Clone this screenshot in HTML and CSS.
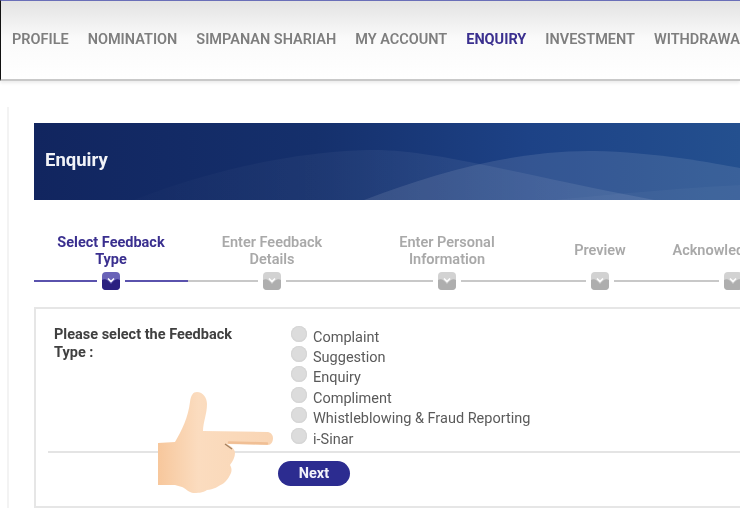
FILE: index.html
```html
<!DOCTYPE html>
<html lang="en">
<head>
<meta charset="utf-8">
<title>Enquiry</title>
<link rel="stylesheet" href="styles.css">
</head>
<body>
<div class="page">
  <header class="topbar">
    <nav class="nav">
      <a class="nav-item">PROFILE</a>
      <a class="nav-item">NOMINATION</a>
      <a class="nav-item">SIMPANAN SHARIAH</a>
      <a class="nav-item">MY ACCOUNT</a>
      <a class="nav-item nav-item-active">ENQUIRY</a>
      <a class="nav-item">INVESTMENT</a>
      <a class="nav-item">WITHDRAWAL</a>
    </nav>
  </header>
  <main class="content">
    <section class="banner">
      <svg class="banner-waves" viewBox="0 0 706 77" preserveAspectRatio="none" aria-hidden="true">
        <defs>
          <linearGradient id="waveFade" x1="0" y1="0" x2="1" y2="0">
            <stop offset="0" stop-color="#fff" stop-opacity=".01"/>
            <stop offset=".5" stop-color="#fff" stop-opacity=".05"/>
            <stop offset="1" stop-color="#fff" stop-opacity=".1"/>
          </linearGradient>
        </defs>
        <path d="M100 77C200 38 290 27 340 27C400 27 480 50 620 77Z" fill="url(#waveFade)"/>
        <path d="M330 77C400 50 480 27 560 28C620 29 680 40 706 45V77Z" fill="#fff" fill-opacity=".1"/>
        <path d="M520 77C590 70 660 64 706 62V77Z" fill="#fff" fill-opacity=".03"/>
      </svg>
      <h1 class="banner-title">Enquiry</h1>
    </section>
    <ol class="steps">
      <li class="step step-active step-w1"><span class="step-label">Select Feedback Type</span><span class="step-track"><span class="step-node"><svg viewBox="0 0 18 18" class="node-icon"><rect width="18" height="18" rx="4" class="node-bg"/><path d="M0 8C3 6 6 8 9 12C12 8 15 6 18 8V14a4 4 0 0 1-4 4H4a4 4 0 0 1-4-4Z" class="node-low"/><path d="M6 6.500 9 9.500l3-3" class="node-chevron"/></svg></span></span></li>
      <li class="step step-w2"><span class="step-label">Enter Feedback Details</span><span class="step-track"><span class="step-node"><svg viewBox="0 0 18 18" class="node-icon"><rect width="18" height="18" rx="4" class="node-bg"/><path d="M0 8C3 6 6 8 9 12C12 8 15 6 18 8V14a4 4 0 0 1-4 4H4a4 4 0 0 1-4-4Z" class="node-low"/><path d="M6 6.500 9 9.500l3-3" class="node-chevron"/></svg></span></span></li>
      <li class="step step-w3"><span class="step-label">Enter Personal Information</span><span class="step-track"><span class="step-node"><svg viewBox="0 0 18 18" class="node-icon"><rect width="18" height="18" rx="4" class="node-bg"/><path d="M0 8C3 6 6 8 9 12C12 8 15 6 18 8V14a4 4 0 0 1-4 4H4a4 4 0 0 1-4-4Z" class="node-low"/><path d="M6 6.500 9 9.500l3-3" class="node-chevron"/></svg></span></span></li>
      <li class="step step-w4"><span class="step-label">Preview</span><span class="step-track"><span class="step-node"><svg viewBox="0 0 18 18" class="node-icon"><rect width="18" height="18" rx="4" class="node-bg"/><path d="M0 8C3 6 6 8 9 12C12 8 15 6 18 8V14a4 4 0 0 1-4 4H4a4 4 0 0 1-4-4Z" class="node-low"/><path d="M6 6.500 9 9.500l3-3" class="node-chevron"/></svg></span></span></li>
      <li class="step step-w5"><span class="step-label">Acknowledgement</span><span class="step-track"><span class="step-node"><svg viewBox="0 0 18 18" class="node-icon"><rect width="18" height="18" rx="4" class="node-bg"/><path d="M0 8C3 6 6 8 9 12C12 8 15 6 18 8V14a4 4 0 0 1-4 4H4a4 4 0 0 1-4-4Z" class="node-low"/><path d="M6 6.500 9 9.500l3-3" class="node-chevron"/></svg></span></span></li>
    </ol>
    <form class="card">
      <div class="field">
        <div class="field-label">Please select the Feedback Type :</div>
        <div class="options">
          <label class="option"><span class="radio"></span>Complaint</label>
          <label class="option"><span class="radio"></span>Suggestion</label>
          <label class="option"><span class="radio"></span>Enquiry</label>
          <label class="option"><span class="radio"></span>Compliment</label>
          <label class="option"><span class="radio"></span>Whistleblowing &amp; Fraud Reporting</label>
          <label class="option"><span class="radio"></span>i-Sinar</label>
        </div>
      </div>
      <div class="actions"><button type="button" class="next">Next</button></div>
    </form>
  </main>
  <svg class="hand" viewBox="0 0 125 110" aria-hidden="true">
    <defs>
      <linearGradient id="skin" x1="0" y1="0" x2="1" y2="0">
        <stop offset="0" stop-color="#f7c79c"/>
        <stop offset=".35" stop-color="#fbdcbf"/>
        <stop offset="1" stop-color="#f9d5b4"/>
      </linearGradient>
    </defs>
    <path d="M3 53L20 52C27 40 33 28 35 12C36 5 38 2 42 2C48 2 52 8 52 14C52 24 48 32 48 41L113 42C117 43 118 46 118 48C118 52 116 55 113 55L72 54C76 56 80 59 80 63C80 67 78 71 75 75C77 78 77 82 75 85C73 89 71 91 69 93C64 96 58 100 52 100C48 103 42 103 38 103C33 102 30 98 27 97L20 95L3 95Z" fill="url(#skin)"/>
    <path d="M74 52.500L112 53.500" class="hand-edge"/>
    <path d="M70 54L77 59" class="hand-shade"/>
  </svg>
</div>
</body>
</html>
```
FILE: styles.css
```css
* { box-sizing: border-box; }
html, body { margin: 0; height: 100%; background: #fff; }
body { font-family: Roboto, "Liberation Sans", sans-serif; overflow: hidden; }
.page { position: relative; width: 740px; height: 509px; overflow: hidden; filter: blur(.45px); }

.topbar {
  height: 81px;
  border-top: 1px solid #6a6fb8;
  border-left: 1px solid #111;
  border-bottom: 2px solid #c9c9c9;
  background: linear-gradient(#e3e3e3, #fafafa 48%, #fff);
  box-shadow: 0 2px 3px rgba(0,0,0,.08);
}
.nav { display: flex; gap: 19px; padding: 30px 0 0 11px; white-space: nowrap; }
.nav-item { font-size: 14.500px; line-height: 17px; font-weight: 600; color: #7e7e7e; }
.nav-item-active { color: #3a2f8f; font-weight: 700; }

.content { margin-left: 7px; margin-top: 26px; padding: 16px 0 0 25px; border-left: 2px solid #f3f3f3; }
.banner {
  position: relative;
  height: 77px;
  width: 706px;
  display: flex;
  align-items: center;
  background: linear-gradient(90deg, #11255f 0%, #15306c 40%, #1d4286 70%, #24508f 100%);
}
.banner-waves { position: absolute; inset: 0; width: 100%; height: 100%; }
.banner-title { position: relative; margin: -4px 0 0 11px; font-size: 18.500px; font-weight: 700; color: #f1f3f8; }

.steps { display: flex; list-style: none; margin: 33px 0 0; padding: 0; width: 770px; }
.step { display: flex; flex-direction: column; align-items: center; flex: none; color: #a9a9a9; }
.step-w1 { width: 154px; }
.step-w2 { width: 168px; }
.step-w3 { width: 182px; }
.step-w4 { width: 124px; }
.step-w5 { width: 142px; }
.step-label {
  height: 39px;
  width: 125px;
  display: flex;
  align-items: center;
  justify-content: center;
  text-align: center;
  font-size: 14.500px;
  line-height: 17px;
  font-weight: 600;
  padding-bottom: 4px;
}
.step-active { color: #3a2f8f; }
.step-active .step-label { font-weight: 700; }
.step-w5 .step-label { white-space: nowrap; }
.step-track { width: 100%; height: 18px; display: flex; justify-content: center; align-items: center; background: linear-gradient(#c8c8c8, #c8c8c8) center / 100% 2px no-repeat; }
.step-active .step-track { background-image: linear-gradient(#5a52ad, #5a52ad); }
.step-node { display: block; width: 28px; height: 18px; padding: 0 5px; background: #fff; }
.node-icon { display: block; width: 18px; height: 18px; }
.node-bg { fill: #d2d2d2; }
.node-low { fill: #aeaeae; }
.node-chevron { fill: none; stroke: #fff; stroke-width: 1.500; }
.step-active .node-bg { fill: #6a63b8; }
.step-active .node-low { fill: #2a2080; }

.card { margin-top: 17px; width: 720px; height: 201px; border: 2px solid #e6e6e6; padding: 0 0 0 12px; }
.field { display: flex; height: 144px; border-bottom: 2px solid #e4e4e4; padding-top: 17px; }
.field-label { flex: none; width: 230px; padding: 0 30px 0 6px; font-size: 14.500px; line-height: 17.500px; font-weight: 700; color: #404040; }
.options { display: flex; flex-direction: column; padding-left: 13px; padding-top: 1px; }
.option { display: flex; height: 20.400px; align-items: center; font-size: 14.500px; color: #5a5a5a; white-space: nowrap; }
.radio { width: 16px; height: 16px; margin: -7px 6px 0 0; border-radius: 50%; background: radial-gradient(circle at 50% 45%, #dcdcdc 0 55%, #cacaca 100%); box-shadow: inset 0 0 0 1px #d6d6d6; }
.actions { padding: 8px 0 0 230px; }
.next { display: block; width: 72px; height: 25px; padding: 0; border: 0; border-radius: 13px; background: #2c2c90; color: #f2f2fa; font: 700 14.500px Roboto, sans-serif; }

.hand { position: absolute; left: 155px; top: 390px; width: 125px; height: 110px; }
.hand-edge { fill: none; stroke: #f0bf95; stroke-width: 2.500; stroke-linecap: round; }
.hand-shade { fill: none; stroke: #a5805f; stroke-width: 1.500; }
```
